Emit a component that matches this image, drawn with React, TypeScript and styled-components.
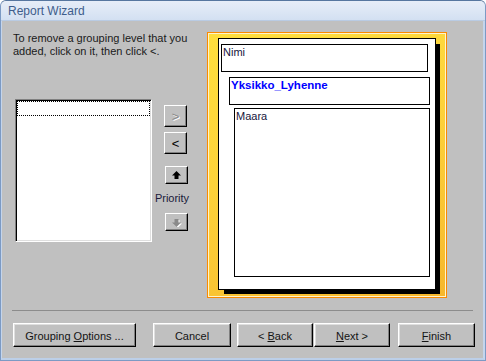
import React from "react";
import styled, { createGlobalStyle } from "styled-components";

const GlobalStyle = createGlobalStyle`
  html, body {
    margin: 0;
    padding: 0;
  }
  body {
    width: 486px;
    height: 361px;
    overflow: hidden;
    background: #ffffff;
    font-family: "Liberation Sans", Arial, sans-serif;
    font-size: 11px;
    color: #000;
  }
`;

const Window = styled.div`
  width: 486px;
  height: 361px;
  box-sizing: border-box;
  display: flex;
  flex-direction: column;
  border: 1px solid #7c9ac4;
  border-top-color: #56769f;
  border-radius: 6px 6px 0 0;
  background: #c0c0c0;
  overflow: hidden;
`;

const TitleBar = styled.div`
  height: 20px;
  flex: none;
  display: flex;
  align-items: center;
  padding: 1px 0 0 7px;
  box-sizing: border-box;
  background: linear-gradient(#e6edf8 0%, #dde7f5 50%, #d3e0f2 100%);
  border-bottom: 1px solid #b9cbe3;
  font-size: 12px;
  color: #3e5d8b;
`;

const Frame = styled.div`
  flex: 1;
  display: flex;
  flex-direction: column;
  border-left: 1px solid #c4d5ec;
  border-right: 2px solid #c4d5ec;
  border-bottom: 2px solid #bccfe8;
  padding: 0 8px 0 11px;
`;

const Content = styled.div`
  display: flex;
  padding-top: 11px;
  height: 266px;
`;

const LeftColumn = styled.div`
  width: 194px;
  display: flex;
  flex-direction: column;
`;

const Instructions = styled.p`
  margin: 0;
  line-height: 13px;
  color: #1a1a1a;
`;

const ListRow = styled.div`
  display: flex;
  margin: 41px 0 0 2px;
`;

const ListBox = styled.div`
  width: 137px;
  height: 143px;
  box-sizing: border-box;
  background: #fff;
  border: 1px solid;
  border-color: #808080 #ffffff #ffffff #808080;
  box-shadow: inset 1px 1px #000, inset -1px -1px #dfdfdf;
  padding: 1px;
`;

const FocusRow = styled.div`
  height: 13px;
  border: 1px dotted #000;
`;

const ArrowColumn = styled.div`
  width: 36px;
  margin-left: 2px;
  padding-top: 6px;
  display: flex;
  flex-direction: column;
`;

const SmallButton = styled.div<{ $h: number; $mt: number; $ml?: number }>`
  width: 23px;
  height: ${(p) => p.$h}px;
  margin: ${(p) => p.$mt}px 0 0 ${(p) => p.$ml ?? 10}px;
  box-sizing: border-box;
  display: flex;
  align-items: center;
  justify-content: center;
  background: #c0c0c0;
  border: 1px solid;
  border-color: #ffffff #000000 #000000 #ffffff;
  box-shadow: inset -1px -1px #808080;
  font-size: 13px;
`;

const Glyph = styled.span<{ $disabled?: boolean }>`
  color: ${(p) => (p.$disabled ? "#8a8a8a" : "#000")};
  text-shadow: ${(p) => (p.$disabled ? "1px 1px 0 #fff" : "none")};
  line-height: 13px;
`;

const PriorityLabel = styled.div`
  margin-top: 8px;
  line-height: 13px;
  text-align: center;
  color: #1a1a3a;
`;

const Preview = styled.div`
  width: 240px;
  height: 266px;
  box-sizing: border-box;
  border: 1px solid #fb8a00;
  box-shadow: inset 0 0 0 1px #fff4cc;
  background: linear-gradient(160deg, #ffdf3e 0%, #fdd23a 45%, #f9c232 80%, #f6b72c 100%);
  padding: 5px 10px;
`;

const Paper = styled.div`
  width: 218px;
  height: 252px;
  box-sizing: border-box;
  background: #fff;
  border: 1px solid #000;
  box-shadow: 5px 5px 0 -1px #000;
  padding-top: 5px;
  display: flex;
  flex-direction: column;
`;

const Field = styled.div<{ $indent: number; $w: number; $h: number; $mt: number; $group?: boolean }>`
  width: ${(p) => p.$w}px;
  height: ${(p) => p.$h}px;
  margin: ${(p) => p.$mt}px 0 0 ${(p) => p.$indent}px;
  box-sizing: border-box;
  border: 1px solid #000;
  padding: 1px;
  line-height: 13px;
  color: ${(p) => (p.$group ? "#0000ff" : "#16163c")};
  font-weight: ${(p) => (p.$group ? "bold" : "normal")};
  font-size: ${(p) => (p.$group ? "11.5px" : "11px")};
`;

const Separator = styled.div`
  margin: 12px 0 0 -1px;
  width: 461px;
  height: 1px;
  background: #8c8c8c;
  flex: none;
`;

const ButtonRow = styled.div`
  display: flex;
  margin-top: 12px;
`;

const PushButton = styled.div<{ $w: number; $ml: number }>`
  width: ${(p) => p.$w}px;
  height: 24px;
  margin-left: ${(p) => p.$ml}px;
  box-sizing: border-box;
  display: flex;
  align-items: center;
  justify-content: center;
  background: #c0c0c0;
  border: 1px solid;
  border-color: #ffffff #000000 #000000 #ffffff;
  box-shadow: inset -1px -1px #808080, inset 1px 1px #dfdfdf;
  color: #141414;
  padding-top: 1px;
  white-space: pre;
`;

const Key = styled.span`
  text-decoration: underline;
`;

const ArrowIcon: React.FC<{ down?: boolean; disabled?: boolean }> = ({ down, disabled }) => {
  const pts = "4.5,0 9,4.5 6.5,4.5 6.5,8 2.5,8 2.5,4.5 0,4.5";
  const fill = disabled ? "#8a8a8a" : "#000";
  return (
    <svg width="10" height="9" viewBox="0 0 10 9" style={down ? { transform: "scaleY(-1)" } : undefined}>
      {disabled && <polygon points={pts} fill="#fff" transform={down ? "translate(1,-1)" : "translate(1,1)"} />}
      <polygon points={pts} fill={fill} />
    </svg>
  );
};

const App: React.FC = () => {
  return (
    <>
      <GlobalStyle />
      <Window>
        <TitleBar>Report Wizard</TitleBar>
        <Frame>
          <Content>
            <LeftColumn>
              <Instructions>
                To remove a grouping level that you
                <br />
                added, click on it, then click &lt;.
              </Instructions>
              <ListRow>
                <ListBox>
                  <FocusRow />
                </ListBox>
                <ArrowColumn>
                  <SmallButton $h={22} $mt={0}>
                    <Glyph $disabled>&gt;</Glyph>
                  </SmallButton>
                  <SmallButton $h={22} $mt={5}>
                    <Glyph>&lt;</Glyph>
                  </SmallButton>
                  <SmallButton $h={18} $mt={12} $ml={11}>
                    <ArrowIcon />
                  </SmallButton>
                  <PriorityLabel>Priority</PriorityLabel>
                  <SmallButton $h={18} $mt={8} $ml={11}>
                    <ArrowIcon down disabled />
                  </SmallButton>
                </ArrowColumn>
              </ListRow>
            </LeftColumn>
            <Preview>
              <Paper>
                <Field $indent={2} $w={207} $h={28} $mt={0}>
                  Nimi
                </Field>
                <Field $indent={10} $w={201} $h={28} $mt={5} $group>
                  Yksikko_Lyhenne
                </Field>
                <Field $indent={15} $w={196} $h={169} $mt={3}>
                  Maara
                </Field>
              </Paper>
            </Preview>
          </Content>
          <Separator />
          <ButtonRow>
            <PushButton $w={123} $ml={0}>
              {"Grouping "}
              <Key>O</Key>
              {"ptions ..."}
            </PushButton>
            <PushButton $w={78} $ml={17}>
              Cancel
            </PushButton>
            <PushButton $w={76} $ml={6}>
              {"< "}
              <Key>B</Key>
              {"ack"}
            </PushButton>
            <PushButton $w={76} $ml={1}>
              <Key>N</Key>
              {"ext >"}
            </PushButton>
            <PushButton $w={77} $ml={8}>
              <Key>F</Key>
              {"inish"}
            </PushButton>
          </ButtonRow>
        </Frame>
      </Window>
    </>
  );
};

export default App;
